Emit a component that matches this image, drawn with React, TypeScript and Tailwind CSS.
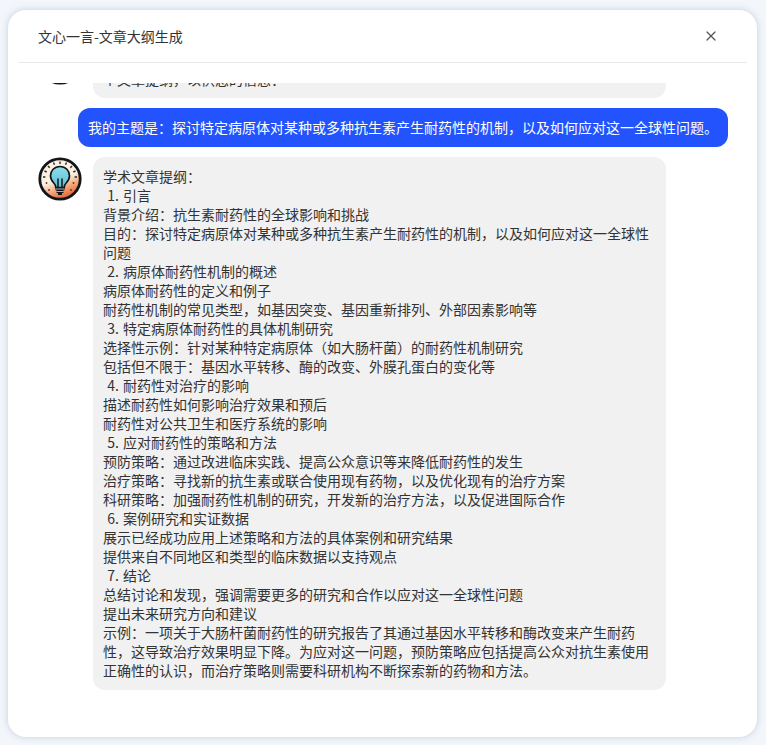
import { X } from "lucide-react";

const outline = [
  "学术文章提纲：",
  " 1. 引言",
  "背景介绍：抗生素耐药性的全球影响和挑战",
  "目的：探讨特定病原体对某种或多种抗生素产生耐药性的机制，以及如何应对这一全球性问题",
  " 2. 病原体耐药性机制的概述",
  "病原体耐药性的定义和例子",
  "耐药性机制的常见类型，如基因突变、基因重新排列、外部因素影响等",
  " 3. 特定病原体耐药性的具体机制研究",
  "选择性示例：针对某种特定病原体（如大肠杆菌）的耐药性机制研究",
  "包括但不限于：基因水平转移、酶的改变、外膜孔蛋白的变化等",
  " 4. 耐药性对治疗的影响",
  "描述耐药性如何影响治疗效果和预后",
  "耐药性对公共卫生和医疗系统的影响",
  " 5. 应对耐药性的策略和方法",
  "预防策略：通过改进临床实践、提高公众意识等来降低耐药性的发生",
  "治疗策略：寻找新的抗生素或联合使用现有药物，以及优化现有的治疗方案",
  "科研策略：加强耐药性机制的研究，开发新的治疗方法，以及促进国际合作",
  " 6. 案例研究和实证数据",
  "展示已经成功应用上述策略和方法的具体案例和研究结果",
  "提供来自不同地区和类型的临床数据以支持观点",
  " 7. 结论",
  "总结讨论和发现，强调需要更多的研究和合作以应对这一全球性问题",
  "提出未来研究方向和建议",
  "示例：一项关于大肠杆菌耐药性的研究报告了其通过基因水平转移和酶改变来产生耐药性，这导致治疗效果明显下降。为应对这一问题，预防策略应包括提高公众对抗生素使用正确性的认识，而治疗策略则需要科研机构不断探索新的药物和方法。",
];

function BulbAvatar() {
  return (
    <svg viewBox="0 0 44 44" className="h-[44px] w-[44px] shrink-0">
      <defs>
        <linearGradient id="avatar-bg" x1="0.3" y1="0.1" x2="0.65" y2="1">
          <stop offset="0.45" stopColor="#fbf0e2" />
          <stop offset="0.72" stopColor="#f3a273" />
          <stop offset="1" stopColor="#e2592c" />
        </linearGradient>
        <linearGradient id="avatar-glass" x1="0" y1="0" x2="0" y2="1">
          <stop offset="0" stopColor="#8fdcea" />
          <stop offset="1" stopColor="#5cc0d6" />
        </linearGradient>
      </defs>
      <circle cx="22" cy="22" r="20.2" fill="url(#avatar-bg)" stroke="#12161a" strokeWidth="2.800" />
      <path
        d="M22 4.500v2.500M15.500 5.500l1 2.300M28.500 5.500l-1 2.300M10 9l1.700 1.800M34 9l-1.700 1.800M6.500 14l2.200 1M37.500 14l-2.200 1M5 20h2.400M39 20h-2.400"
        stroke="#2a2a2a"
        strokeWidth="1.400"
      />
      <path
        d="M22 9.500c-5.700 0-9.500 4.300-9.500 9.300 0 3.200 1.500 5.400 3.300 7.200 1.300 1.300 1.900 2.700 2 4.500h8.400c.1-1.800.7-3.200 2-4.500 1.800-1.800 3.300-4 3.300-7.200 0-5-3.800-9.300-9.500-9.300Z"
        fill="url(#avatar-glass)"
        stroke="#12161a"
        strokeWidth="1.700"
      />
      <path d="M20 30.500v-9M24 30.500v-9" stroke="#12161a" strokeWidth="1.500" />
      <path d="M17.500 30h9v3.200h-9zM18.500 33.200h7v2.800h-7zM20 36h4v2h-4z" fill="#12161a" />
      <path d="M18 32h8M18.500 34.500h7" stroke="#f2f2f2" strokeWidth="0.700" />
      <circle cx="8.500" cy="26" r="0.900" fill="#7a2b12" />
      <circle cx="11" cy="33" r="0.900" fill="#7a2b12" />
      <circle cx="35.500" cy="26" r="0.900" fill="#7a2b12" />
      <circle cx="33" cy="33" r="0.900" fill="#7a2b12" />
    </svg>
  );
}

export default function App() {
  return (
    <div className="h-[745px] w-[766px] bg-[#f3f7fc] pl-[8px] pr-[9px] pt-[10px] pb-[8px] [font-family:'Noto_Sans_CJK_SC','Liberation_Sans',sans-serif]">
      <div className="flex h-full flex-col overflow-hidden rounded-[18px] bg-white shadow-[0_0_7px_rgba(150,165,190,0.5)]">
        <header className="mx-[10px] flex h-[53px] shrink-0 items-center justify-between border-b border-[#e8eaee] pl-[20px] pr-[28px]">
          <h1 className="text-[14px] font-normal text-[#333333]">文心一言-文章大纲生成</h1>
          <X className="h-[16px] w-[16px] text-[#555555]" strokeWidth={1.8} />
        </header>
        <div className="mt-[20px] min-h-0 flex-1 overflow-hidden">
          <div className="mt-[-16px] flex flex-col gap-[10px] pl-[30px] pr-[29px]">
            <div className="flex items-start gap-[11px]">
              <div className="h-[18px] w-[44px] shrink-0 overflow-hidden">
                <div className="mt-[-26px]">
                  <BulbAvatar />
                </div>
              </div>
              <div className="h-[31px] w-[573px] rounded-b-[12px] bg-[#f1f1f1] px-[10px] pt-[3px] text-[14px] leading-[19px] text-[#333333]">
                个文章提纲，以供您的信息：
              </div>
            </div>
            <div className="flex justify-end">
              <div className="rounded-[12px] bg-[#2353fc] p-[10px] text-[14px] leading-[19px] text-white">
                我的主题是：探讨特定病原体对某种或多种抗生素产生耐药性的机制，以及如何应对这一全球性问题。
              </div>
            </div>
            <div className="flex items-start gap-[11px]">
              <BulbAvatar />
              <div className="w-[573px] whitespace-pre-wrap rounded-[12px] bg-[#f1f1f1] p-[10px] text-[14px] leading-[19px] text-[#333333] [word-spacing:1px]">
                {outline.map((line, i) => (
                  <div key={i}>{line}</div>
                ))}
              </div>
            </div>
          </div>
        </div>
      </div>
    </div>
  );
}
